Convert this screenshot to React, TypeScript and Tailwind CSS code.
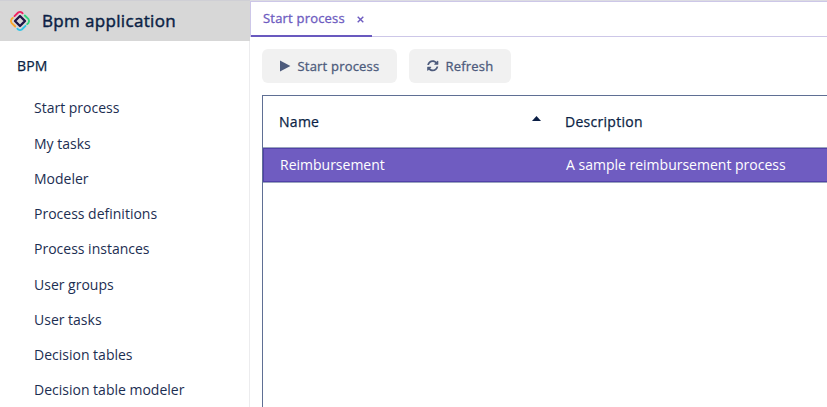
import { FaSyncAlt } from "react-icons/fa";

const items = [
  "Start process",
  "My tasks",
  "Modeler",
  "Process definitions",
  "Process instances",
  "User groups",
  "User tasks",
  "Decision tables",
  "Decision table modeler",
];

function Logo() {
  return (
    <svg width="22" height="22" viewBox="0 0 22 22" fill="none" strokeWidth="1.9" strokeLinecap="round" strokeLinejoin="round">
      <path d="M5.5 6.2 L9.2 2.5 Q10 1.9 11 1.9 Q12 1.9 12.8 2.5 L13.6 3.3" stroke="#f01f61" />
      <path d="M15.8 5.5 L19.5 9.2 Q20.7 11 19.5 12.8 L18.2 14.1" stroke="#31d37c" />
      <path d="M16.5 15.8 L12.8 19.5 Q11 20.7 9.2 19.5 L8.4 18.7" stroke="#2dc4e6" />
      <path d="M6.2 16.5 L2.5 12.8 Q1.3 11 2.5 9.2 L3.8 7.9" stroke="#fba72b" />
      <path d="M11 6 L16 11 L11 16 L6 11 Z" stroke="#1d1647" strokeWidth="2.3" />
    </svg>
  );
}

export default function App() {
  return (
    <div className="flex h-[407px] w-[827px] overflow-hidden bg-white font-['Open_Sans','Noto_Sans',sans-serif] text-[14px] text-[#0b1f45]">
      <aside className="flex w-[250px] shrink-0 flex-col border-r border-[#ececee] bg-white">
        <header className="flex h-[41px] w-[250px] shrink-0 items-center gap-[11px] border-t border-[#cfcfd5] bg-[#d7d7d7] pl-[9px]">
          <Logo />
          <h1 className="text-[17px] leading-6 font-normal tracking-[0.34px] whitespace-nowrap [-webkit-text-stroke:0.45px_currentColor]">
            Bpm application
          </h1>
        </header>
        <h2 className="mt-[15px] pl-[17px] text-[14px] leading-5 tracking-[0.15px] [-webkit-text-stroke:0.25px_currentColor]">BPM</h2>
        <nav className="mt-[14.4px] flex flex-col pl-[34px]">
          {items.map((item) => (
            <a key={item} className="h-[35.25px] text-[14px] leading-[35.25px] font-normal whitespace-nowrap text-[#1c2e52]">
              {item}
            </a>
          ))}
        </nav>
      </aside>
      <main className="flex min-w-0 flex-1 flex-col border-t border-[#dcdce2]">
        <div className="flex h-[36px] shrink-0 border-t border-b border-l border-[#cdc7e8]">
          <div className="mb-[-1px] flex h-[35px] w-[121px] items-center border-b-2 border-[#6959bf] pl-3 text-[13px] tracking-[0.2px] text-[#6d5bc0] [-webkit-text-stroke:0.3px_currentColor]">
            <span className="whitespace-nowrap">Start process</span>
            <svg className="mt-[2px] ml-[12px]" width="7" height="7" viewBox="0 0 7 7" stroke="#6d5bc0" strokeWidth="1.4">
              <path d="M.7 .7 L6.3 6.3 M6.3 .7 L.7 6.3" />
            </svg>
          </div>
        </div>
        <div className="mt-3 flex gap-3 pl-3 text-[13px] tracking-[0.2px] text-[#4d5b7c]">
          <button className="flex h-[34px] w-[135px] items-center rounded-md bg-[#f1f1f1] pl-[18px]">
            <svg width="11" height="12" viewBox="0 0 11 12" fill="#4d5b7c">
              <path d="M0 .6 L10.4 6 L0 11.4 Z" />
            </svg>
            <span className="mt-px ml-[6.5px] whitespace-nowrap [-webkit-text-stroke:0.3px_currentColor]">Start process</span>
          </button>
          <button className="flex h-[34px] w-[102px] items-center rounded-md bg-[#f1f1f1] pl-[18px]">
            <FaSyncAlt size={11.5} />
            <span className="mt-px ml-[7px] whitespace-nowrap [-webkit-text-stroke:0.3px_currentColor]">Refresh</span>
          </button>
        </div>
        <section className="mt-3 ml-3 flex-1 border-t border-l border-[#5f6f94]">
          <div className="flex h-[51px] items-center text-[14px] tracking-[0.28px]">
            <div className="flex w-[286px] items-center justify-between pr-2 pl-4">
              <span className="[-webkit-text-stroke:0.25px_currentColor]">Name</span>
              <svg className="mt-[-7px]" width="9" height="5" viewBox="0 0 9 5" fill="#0b1f45">
                <path d="M0 5 L4.5 0 L9 5 Z" />
              </svg>
            </div>
            <span className="pl-4 [-webkit-text-stroke:0.25px_currentColor]">Description</span>
          </div>
          <div className="border-y border-[#9ba5bf]">
            <div className="flex h-[34px] items-center border border-r-0 border-[#5141a8] bg-[#6f5cc1] pb-[2px] text-[14px] text-white">
              <span className="w-[286px] pl-4">Reimbursement</span>
              <span className="pl-4">A sample reimbursement process</span>
            </div>
          </div>
        </section>
      </main>
    </div>
  );
}
